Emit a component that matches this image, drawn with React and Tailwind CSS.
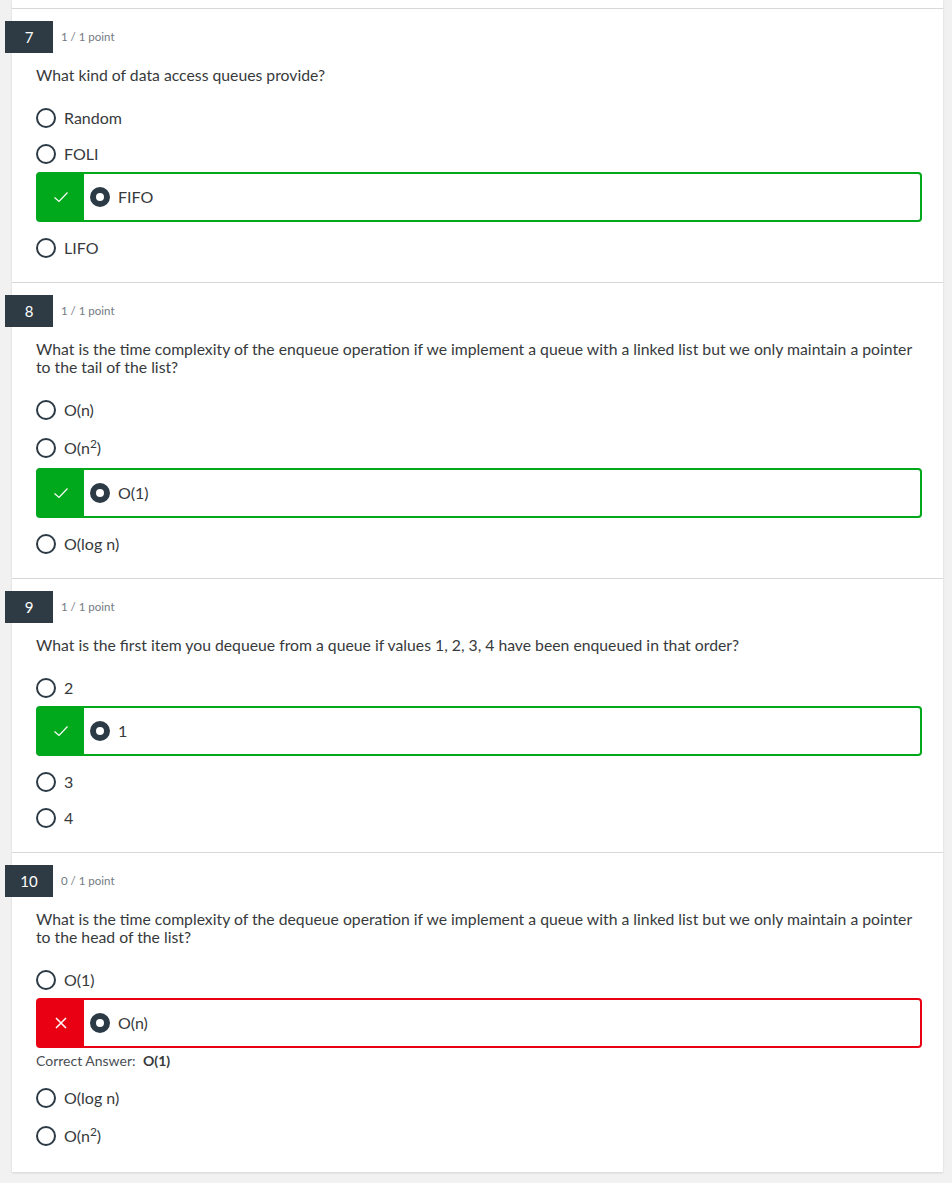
import React from "react";

const questions = [
  {
    num: 7,
    score: "1 / 1 point",
    text: "What kind of data access queues provide?",
    options: ["Random", "FOLI", "FIFO", "LIFO"],
    picked: 2,
    correct: true,
  },
  {
    num: 8,
    score: "1 / 1 point",
    text: "What is the time complexity of the enqueue operation if we implement a queue with a linked list but we only maintain a pointer to the tail of the list?",
    options: ["O(n)", "sq", "O(1)", "O(log n)"],
    picked: 2,
    correct: true,
  },
  {
    num: 9,
    score: "1 / 1 point",
    text: "What is the first item you dequeue from a queue if values 1, 2, 3, 4 have been enqueued in that order?",
    options: ["2", "1", "3", "4"],
    picked: 1,
    correct: true,
  },
  {
    num: 10,
    score: "0 / 1 point",
    text: "What is the time complexity of the dequeue operation if we implement a queue with a linked list but we only maintain a pointer to the head of the list?",
    options: ["O(1)", "O(n)", "O(log n)", "sq"],
    picked: 1,
    correct: false,
    answer: "O(1)",
  },
];

function Label({ value }) {
  if (value === "sq") {
    return (
      <span>
        O(n<sup className="text-[12px]">2</sup>)
      </span>
    );
  }
  return <span>{value}</span>;
}

function Option({ value }) {
  return (
    <div className={`flex items-center gap-2 ${value === "sq" ? "h-10" : "h-9"}`}>
      <span className="w-5 h-5 rounded-full border-2 border-[#2c3a45] shrink-0" />
      <Label value={value} />
    </div>
  );
}

function Picked({ value, correct }) {
  const border = correct ? "border-[#00a81c]" : "border-[#ea0013]";
  const fill = correct ? "bg-[#00a81c]" : "bg-[#ea0013]";
  return (
    <div className={`flex items-center h-[50px] border-2 rounded ${border}`}>
      <div className={`w-[46px] h-full flex items-center justify-center ${fill}`}>
        {correct ? (
          <svg width="16" height="12" viewBox="0 0 16 12" fill="none">
            <path d="M1.5 6.5 L6 10.5 L14.5 1.5" stroke="white" strokeWidth="1.2" />
          </svg>
        ) : (
          <svg width="12" height="12" viewBox="0 0 12 12" fill="none">
            <path d="M1 1 L11 11 M11 1 L1 11" stroke="white" strokeWidth="1.5" />
          </svg>
        )}
      </div>
      <span className="ml-1.5 w-5 h-5 rounded-full border-[6px] border-[#2c3a45] bg-white shrink-0" />
      <span className="ml-2">
        <Label value={value} />
      </span>
    </div>
  );
}

function Question({ q }) {
  return (
    <section className="border-t border-[#d6d9dc] pt-3 pb-4 pl-6 pr-[21px]">
      <div className="flex items-center gap-2 -ml-[31px]">
        <div className="w-12 h-8 bg-[#2e3b45] text-white text-[15px] flex items-center justify-center">
          {q.num}
        </div>
        <span className="text-[11.5px] text-[#747b82]">{q.score}</span>
      </div>
      <p className="mt-[13px] mb-4 text-[15.75px] leading-[18px]">{q.text}</p>
      <div>
        {q.options.map((o, i) =>
          i === q.picked ? (
            <div key={i} className={q.correct ? "mb-2" : "mb-[3px]"}>
              <Picked value={o} correct={q.correct} />
              {!q.correct && (
                <div className="mt-[4px] mb-[10px] text-[14px] leading-[18px] text-[#4a4f54]">
                  Correct Answer: <b className="ml-1 text-[#373a3c]">{q.answer}</b>
                </div>
              )}
            </div>
          ) : (
            <Option key={i} value={o} />
          )
        )}
      </div>
    </section>
  );
}

export default function App() {
  return (
    <div
      className="min-h-[1183px] bg-[#f1f1f1] pl-3 pr-[9px] pb-3 text-[#373a3c] text-[16px]"
      style={{ fontFamily: "Lato, 'Noto Sans', sans-serif" }}
    >
      <div className="bg-white pt-2 shadow-[0_1px_2px_rgba(0,0,0,0.12)]">
        {questions.map((q) => (
          <Question key={q.num} q={q} />
        ))}
      </div>
    </div>
  );
}
